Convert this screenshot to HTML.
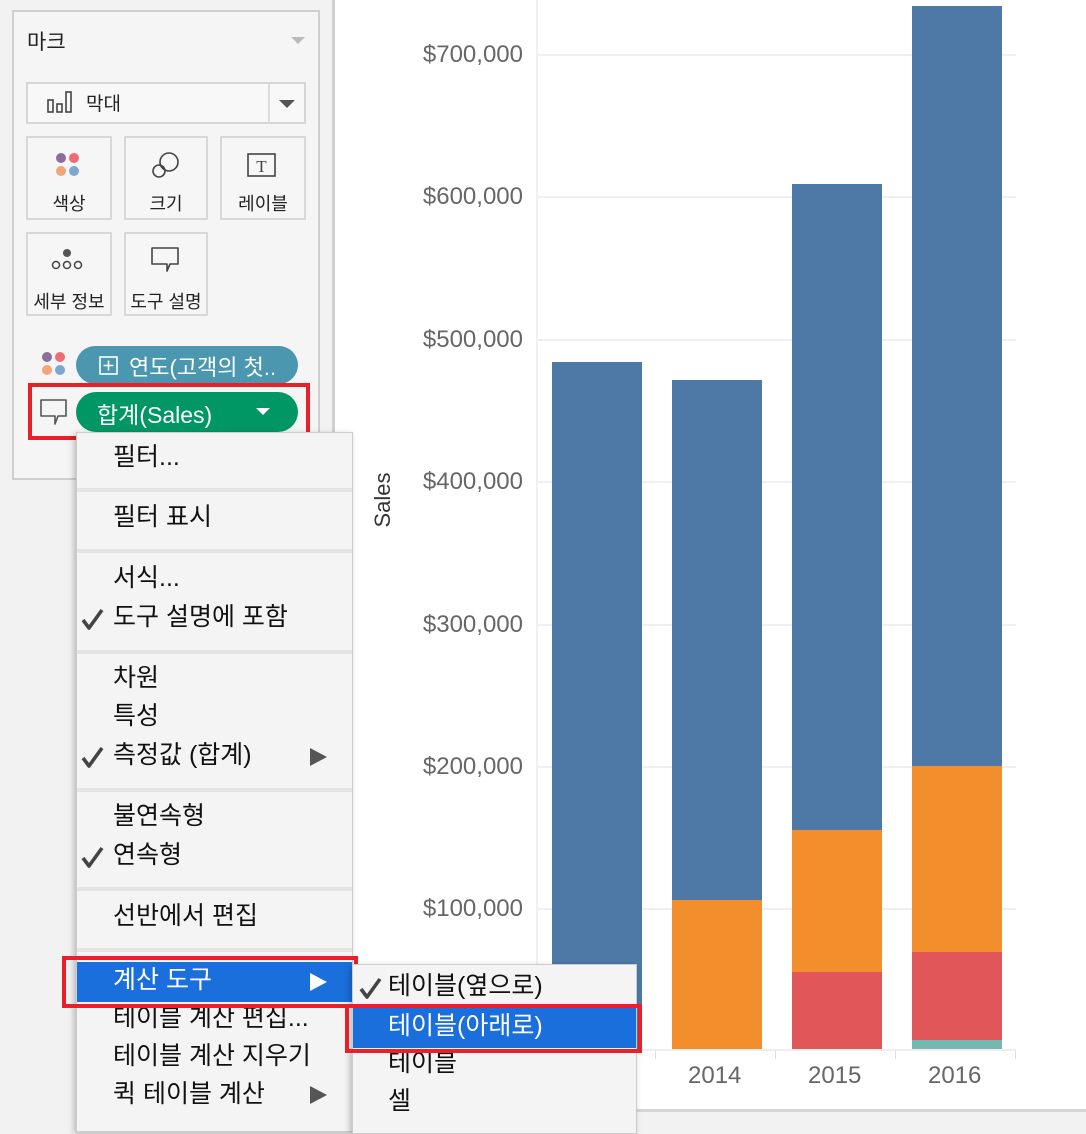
<!DOCTYPE html>
<html><head><meta charset="utf-8"><style>
*{margin:0;padding:0;box-sizing:border-box}
body{width:1086px;height:1122px;position:relative;overflow:hidden;background:#f2f2f2;font-family:"Liberation Sans","Noto Sans CJK KR",sans-serif}
.a{position:absolute}
.t{position:absolute;white-space:nowrap}
.mi{position:absolute;left:113px;font-size:25px;line-height:38px;height:38px;color:#111;white-space:nowrap}
.ck{position:absolute;left:81px;width:24px;height:24px}
.sep{position:absolute;left:77px;width:275px;height:4px;background:#e4e4e4}
.btn{position:absolute;background:#f6f6f6;border:2px solid #d8d8d8}
.lbl{position:absolute;width:100%;text-align:center;font-size:18px;color:#222}
.yl{position:absolute;right:563px;font-size:24px;color:#666;line-height:26px}
.g{position:absolute;left:538px;width:478px;height:2px;background:#f0f0f0}
</style></head><body>
<svg width="0" height="0" style="position:absolute"><defs><symbol id="ck" viewBox="0 0 24 24"><path d="M2 13L8 21L21 3" fill="none" stroke="#444" stroke-width="3.6" stroke-linejoin="round"/></symbol></defs></svg>
<!-- left panel -->
<div class="a" style="left:12px;top:10px;width:308px;height:470px;border:2px solid #cfcfcf;background:#f5f5f5"></div>
<div class="t" style="left:27px;top:26px;font-size:21px;color:#222">마크</div>
<div class="a" style="left:291px;top:37px;border-left:7px solid transparent;border-right:7px solid transparent;border-top:7px solid #bbb"></div>
<div class="a" style="left:26px;top:82px;width:280px;height:42px;border:2px solid #d6d6d6;background:#f8f8f8"></div>
<div class="a" style="left:268px;top:84px;width:2px;height:38px;background:#ddd"></div>
<div class="a" style="left:279px;top:100px;border-left:8px solid transparent;border-right:8px solid transparent;border-top:8px solid #555"></div>
<svg class="a" style="left:46px;top:90px" width="30" height="26"><g fill="none" stroke="#444" stroke-width="1.6"><rect x="2" y="10" width="5" height="12"/><rect x="11" y="14" width="5" height="8"/><rect x="20" y="2" width="5" height="20"/></g></svg>
<div class="t" style="left:86px;top:89px;font-size:19px;color:#222">막대</div>

<div class="btn" style="left:26px;top:136px;width:86px;height:84px"><div class="lbl" style="top:52px">색상</div></div>
<svg class="a" style="left:54px;top:152px" width="28" height="28"><circle cx="7" cy="6" r="5" fill="#8a6f9c"/><circle cx="20" cy="6" r="5" fill="#ef6b73"/><circle cx="7" cy="19" r="5" fill="#f2a47a"/><circle cx="20" cy="19" r="5" fill="#7ea6d2"/></svg>
<div class="btn" style="left:124px;top:136px;width:84px;height:84px"><div class="lbl" style="top:52px">크기</div></div>
<svg class="a" style="left:150px;top:150px" width="32" height="32"><g fill="none" stroke="#444" stroke-width="1.6"><circle cx="19" cy="12" r="9"/><circle cx="9" cy="21" r="6"/></g></svg>
<div class="btn" style="left:220px;top:136px;width:86px;height:84px"><div class="lbl" style="top:52px">레이블</div></div>
<svg class="a" style="left:247px;top:153px" width="30" height="26"><rect x="1" y="1" width="27" height="22" fill="none" stroke="#444" stroke-width="1.6"/><text x="14.5" y="19" text-anchor="middle" font-family="Liberation Serif" font-size="17" fill="#444">T</text></svg>
<div class="btn" style="left:26px;top:232px;width:86px;height:84px"><div class="lbl" style="top:54px">세부 정보</div></div>
<svg class="a" style="left:50px;top:246px" width="36" height="28"><circle cx="17" cy="7" r="4" fill="#555"/><g fill="none" stroke="#444" stroke-width="1.5"><circle cx="6" cy="19" r="3.5"/><circle cx="17" cy="19" r="3.5"/><circle cx="28" cy="19" r="3.5"/></g></svg>
<div class="btn" style="left:124px;top:232px;width:84px;height:84px"><div class="lbl" style="top:54px">도구 설명</div></div>
<svg class="a" style="left:150px;top:246px" width="32" height="30"><path d="M2 2H28V18H20L17 25V18H2Z" fill="none" stroke="#444" stroke-width="1.6" stroke-linejoin="round"/></svg>

<svg class="a" style="left:40px;top:351px" width="28" height="28"><circle cx="7" cy="6" r="5" fill="#8a6f9c"/><circle cx="20" cy="6" r="5" fill="#ef6b73"/><circle cx="7" cy="19" r="5" fill="#f2a47a"/><circle cx="20" cy="19" r="5" fill="#7ea6d2"/></svg>
<div class="a" style="left:76px;top:346px;width:222px;height:38px;border-radius:19px;background:#4b97b0"></div>
<svg class="a" style="left:99px;top:356px" width="20" height="20"><rect x="1" y="1" width="17" height="17" fill="none" stroke="#fff" stroke-width="1.6"/><path d="M9.5 4.5V14.5M4.5 9.5H14.5" stroke="#fff" stroke-width="1.6"/></svg>
<div class="t" style="left:129px;top:350px;font-size:22px;color:#fff">연도(고객의 첫..</div>
<svg class="a" style="left:39px;top:398px" width="30" height="30"><path d="M2 2H27V18H19L16 26V18H2Z" fill="none" stroke="#555" stroke-width="1.6" stroke-linejoin="round"/></svg>
<div class="a" style="left:76px;top:392px;width:222px;height:40px;border-radius:20px;background:#019764"></div>
<div class="t" style="left:97px;top:396px;font-size:23px;color:#fff">합계(Sales)</div>
<div class="a" style="left:256px;top:408px;border-left:7px solid transparent;border-right:7px solid transparent;border-top:7px solid #fff"></div>
<div class="a" style="left:28px;top:383px;width:282px;height:57px;border:4px solid #e8202a"></div>

<!-- chart area -->
<div class="a" style="left:332px;top:0;width:754px;height:1110px;background:#fff;border-left:3px solid #d0d0d0"></div>
<div class="a" style="left:332px;top:1109px;width:754px;height:3px;background:#d6d6d6"></div>
<div class="a" style="left:536px;top:0;width:2px;height:1050px;background:#f0f0f0"></div>
<div class="g" style="top:54px"></div><div class="g" style="top:196px"></div><div class="g" style="top:339px"></div><div class="g" style="top:481px"></div><div class="g" style="top:624px"></div><div class="g" style="top:766px"></div><div class="g" style="top:908px"></div>
<div class="a" style="left:538px;top:1049px;width:478px;height:2px;background:#eee"></div>
<div class="a" style="left:655px;top:1051px;width:1px;height:8px;background:#ddd"></div>
<div class="a" style="left:775px;top:1051px;width:1px;height:8px;background:#ddd"></div>
<div class="a" style="left:895px;top:1051px;width:1px;height:8px;background:#ddd"></div>
<div class="a" style="left:1015px;top:1051px;width:1px;height:8px;background:#ddd"></div>
<div class="yl" style="top:42px">$700,000</div>
<div class="yl" style="top:184px">$600,000</div>
<div class="yl" style="top:327px">$500,000</div>
<div class="yl" style="top:469px">$400,000</div>
<div class="yl" style="top:612px">$300,000</div>
<div class="yl" style="top:754px">$200,000</div>
<div class="yl" style="top:896px">$100,000</div>
<div class="t" style="left:355px;top:487px;font-size:22px;color:#333;transform:rotate(-90deg);transform-origin:center;width:56px;text-align:center">Sales</div>
<!-- bars -->
<div class="a" style="left:552px;top:362px;width:90px;height:687px;background:#4e79a7"></div>
<div class="a" style="left:672px;top:380px;width:90px;height:520px;background:#4e79a7"></div>
<div class="a" style="left:672px;top:900px;width:90px;height:149px;background:#f28e2b"></div>
<div class="a" style="left:792px;top:184px;width:90px;height:646px;background:#4e79a7"></div>
<div class="a" style="left:792px;top:830px;width:90px;height:142px;background:#f28e2b"></div>
<div class="a" style="left:792px;top:972px;width:90px;height:77px;background:#e15759"></div>
<div class="a" style="left:912px;top:6px;width:90px;height:760px;background:#4e79a7"></div>
<div class="a" style="left:912px;top:766px;width:90px;height:186px;background:#f28e2b"></div>
<div class="a" style="left:912px;top:952px;width:90px;height:88px;background:#e15759"></div>
<div class="a" style="left:912px;top:1040px;width:90px;height:9px;background:#76b7b2"></div>
<div class="t" style="left:688px;top:1062px;font-size:24px;color:#666">2014</div>
<div class="t" style="left:808px;top:1062px;font-size:24px;color:#666">2015</div>
<div class="t" style="left:928px;top:1062px;font-size:24px;color:#666">2016</div>

<!-- context menu -->
<div class="a" style="left:76px;top:432px;width:277px;height:700px;background:#f4f4f4;border:1px solid #ccc;box-shadow:-2px 2px 6px rgba(0,0,0,.25)"></div>
<div class="mi" style="top:438px">필터...</div>
<div class="sep" style="top:488px"></div>
<div class="mi" style="top:498px">필터 표시</div>
<div class="sep" style="top:549px"></div>
<div class="mi" style="top:559px">서식...</div>
<svg class="ck" style="top:607px"><use href="#ck"/></svg><div class="mi" style="top:598px">도구 설명에 포함</div>
<div class="sep" style="top:650px"></div>
<div class="mi" style="top:659px">차원</div>
<div class="mi" style="top:697px">특성</div>
<svg class="ck" style="top:745px"><use href="#ck"/></svg><div class="mi" style="top:736px">측정값 (합계)</div>
<div class="a" style="left:310px;top:748px;border-top:9px solid transparent;border-bottom:9px solid transparent;border-left:17px solid #555"></div>
<div class="sep" style="top:788px"></div>
<div class="mi" style="top:797px">불연속형</div>
<svg class="ck" style="top:845px"><use href="#ck"/></svg><div class="mi" style="top:836px">연속형</div>
<div class="sep" style="top:887px"></div>
<div class="mi" style="top:897px">선반에서 편집</div>
<div class="sep" style="top:948px"></div>
<div class="a" style="left:77px;top:962px;width:275px;height:40px;background:#1b6fdc"></div>
<div class="mi" style="top:961px;color:#fff">계산 도구</div>
<div class="a" style="left:310px;top:973px;border-top:9px solid transparent;border-bottom:9px solid transparent;border-left:17px solid #fff"></div>
<div class="mi" style="top:999px">테이블 계산 편집...</div>
<div class="mi" style="top:1037px">테이블 계산 지우기</div>
<div class="mi" style="top:1075px">퀵 테이블 계산</div>
<div class="a" style="left:310px;top:1086px;border-top:9px solid transparent;border-bottom:9px solid transparent;border-left:17px solid #555"></div>
<div class="a" style="left:62px;top:956px;width:296px;height:52px;border:4px solid #e8202a"></div>

<!-- submenu -->
<div class="a" style="left:352px;top:964px;width:285px;height:170px;background:#f4f4f4;border:1px solid #ccc;box-shadow:-2px 2px 6px rgba(0,0,0,.25)"></div>
<svg class="ck" style="left:359px;top:976px"><use href="#ck"/></svg>
<div class="mi" style="left:388px;top:967px">테이블(옆으로)</div>
<div class="a" style="left:353px;top:1008px;width:283px;height:40px;background:#1b6fdc"></div>
<div class="mi" style="left:388px;top:1007px;color:#fff">테이블(아래로)</div>
<div class="mi" style="left:388px;top:1044px">테이블</div>
<div class="mi" style="left:388px;top:1082px">셀</div>
<div class="a" style="left:345px;top:1004px;width:297px;height:49px;border:4px solid #e8202a"></div>
</body></html>
